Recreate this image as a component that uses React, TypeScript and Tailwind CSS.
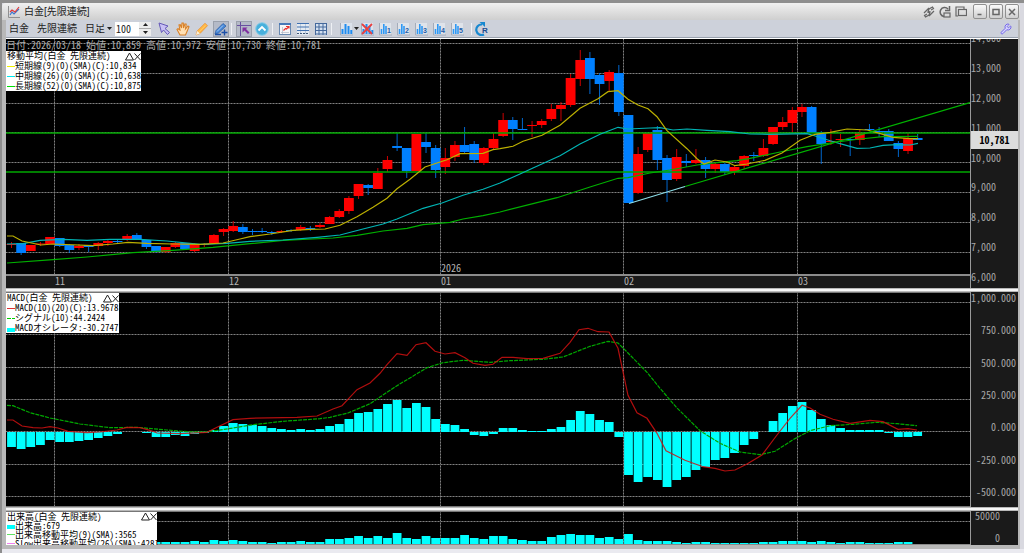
import React from 'react';
import { Wrench } from 'lucide-react';

type Candle = [high: number, top: number, bottom: number, low: number, up: 0 | 1];

const FIRST_X = 11.5;
const STEP = 9.64;
const MONTH_LINES = [54.5, 228.5, 440.5, 623.5, 797.5];
const MONTHS = [
  { label: '', span: 49 },
  { label: '11', span: 174 },
  { label: '12', span: 212 },
  { label: '01', span: 183, year: '2026' },
  { label: '02', span: 174 },
  { label: '03', span: 172 },
];

const barX = (i: number) => FIRST_X + STEP * i;

// high, body top, body bottom, low (plot units), 1 = up day
const CANDLES: Candle[] = [
  [242, 244, 245, 248, 1], [243, 243, 253, 255, 0], [245, 245, 251, 251, 1], [242, 243.5, 244.5, 246, 1],
  [237, 237, 244, 244, 1], [238, 238, 246, 247, 0], [244, 245, 250, 253, 0], [244, 246, 248, 250, 1],
  [245, 245, 247, 252, 0], [242, 243, 246, 250, 1], [240, 241, 243, 246, 1], [239, 241, 242, 243, 0],
  [234, 236, 240, 241, 1], [233, 235, 240, 240, 0], [240, 240, 247, 249, 0], [246, 246, 252, 253, 0],
  [247, 247, 252, 253, 1], [242, 243, 247, 248, 1], [243, 243, 249, 249, 0], [243, 244, 251, 252, 1],
  [243, 244, 245, 247, 1], [234, 235, 243, 243, 1], [228, 229, 232, 236, 1], [221, 226, 231, 232, 1],
  [224, 227, 232, 234, 0], [229, 231, 232, 235, 0], [228, 231, 232, 233, 0], [231, 232, 233, 235, 0],
  [230, 231, 232, 233, 1], [229, 230, 231, 232, 0], [225, 227, 230, 231, 1], [226, 228, 229, 231, 0],
  [223, 225, 227, 228, 1], [216, 217, 224, 224, 1], [209, 211, 217, 218, 1], [196, 198, 211, 214, 1],
  [184, 184, 196, 199, 1], [184, 185, 188, 195, 0], [168, 173, 189, 189, 1], [156, 160, 169, 172, 1],
  [133, 146, 148, 151, 0], [148, 148, 171, 178, 0], [134, 134, 171, 171, 1], [133, 142, 147, 153, 0],
  [145, 148, 170, 178, 0], [148, 158, 167, 174, 1], [141, 145, 157, 161, 1], [127, 145, 152, 153, 0],
  [141, 144, 160, 163, 0], [147, 148, 163, 165, 1], [133, 139, 148, 150, 1], [113, 120, 136, 137, 1],
  [117, 120, 129, 140, 0], [118, 129, 130, 130, 0], [121, 125, 126, 137, 1], [119, 121, 125, 128, 1],
  [104, 109, 119, 121, 1], [102, 105, 109, 121, 1], [74, 78, 105, 107, 1], [50, 60, 79, 86, 1],
  [52, 58, 79, 94, 0], [73, 75, 84, 105, 0], [70, 72, 81, 91, 1], [65, 73, 112, 116, 0],
  [115, 115, 203, 203, 0], [147, 154, 193, 194, 1], [133, 133, 150, 152, 1], [126, 130, 160, 170, 0],
  [155, 158, 180, 202, 0], [149, 157, 179, 181, 1], [154, 161, 163, 167, 0], [149, 160, 163, 164, 1],
  [157, 160, 169, 178, 0], [162, 164, 169, 173, 1], [163, 164, 172, 175, 0], [165, 167, 172, 175, 1],
  [155, 156, 166, 169, 1], [152, 155, 156, 161, 0], [139, 148, 156, 157, 1], [127, 127, 144, 145, 1],
  [117, 122, 127, 130, 1], [107, 110, 123, 132, 1], [104, 107, 112, 117, 1], [106, 107, 133, 133, 0],
  [131, 132, 144, 164, 0], [129, 141, 142, 145, 1], [134, 139, 140, 147, 1], [138, 139, 140, 156, 0],
  [129, 133, 140, 145, 1], [124, 129, 130, 131, 0], [127, 131, 132, 137, 0], [129, 131, 141, 141, 0],
  [141, 143, 149, 157, 0], [133, 138, 151, 154, 1], [134, 138, 140, 140, 0],
];

const SMA_SHORT =
  '7,236 13,236 22,241 41,245 53,244 93,245.7 113,244 128,242.3 147,243.3 173,244 200,244.3 223,243 240,239 250,236.7 270,234 293,230.3 310,229.3 325,229 340,225.3 357,216.7 373,207.3 387,198.3 397,188.7 410,179.3 425,167 440,162 447,159.7 460,153.7 483,153.3 493,149.7 500,148.7 513,146.3 523,141.3 542,135.3 560,125.3 580,108.3 598,98.7 608,91.7 618,90.7 628,99.3 638,105 648,108.7 657,116.7 667,130.7 687,148.7 697,158.7 704,164 715,160 727,162 735,165.7 747,164 765,160.3 782,153 800,140.3 815,134.3 830,132.3 847,129 867,130 877,132.7 893,137.3 910,138.7 918,138.7';
const SMA_MID =
  '7,244 23,243.7 40,240.3 63,239.3 87,240.3 110,239.3 140,239.3 167,241 200,244.3 227,243.3 250,241.3 283,240 317,237.3 340,235 363,229 383,224 397,219 423,208.3 442,203 463,195.3 483,189.3 500,183 520,174 533,168 560,155.7 580,144 600,134.3 618,127.3 628,129 650,128 660,127.7 673,130 687,129 707,130.3 730,131.7 750,134 770,134.3 807,133.7 813,135.3 827,139.7 840,143.7 857,148.3 870,148 883,145.3 897,144.7 910,145 918,143.3';
const SMA_LONG =
  '7,263 53,259.7 87,257 133,252.7 173,250.3 213,247.3 250,243.7 283,240.3 333,238 357,235.3 383,231 407,228.3 423,224.7 450,222.3 463,219 483,215.7 500,212 533,203.7 557,197.7 590,187 618,178.3 628,177.7 650,173 670,170 697,165 717,162.7 737,160.7 750,158.3 780,152 807,146.7 837,142 860,139 883,136.7 918,136.3';
const MACD_LINE =
  '7,420 13,420 22,426 33,427.7 42,428 50,426.7 58,428 68,431.3 87,432.7 100,432 117,430 127,427.3 140,427.7 150,430.3 157,433 180,433.7 207,432.3 217,427.3 233,419.7 250,418.3 297,417.3 317,416 333,409 342,405.7 357,389.7 370,383 380,373.3 387,364.7 397,353.7 407,355.3 416,344.7 426,342.7 435,351.3 445,354 455,352.7 465,357.7 473,363.3 485,365.3 493,364.3 502,357.3 513,357.3 527,358.7 543,358.3 560,353.3 570,342.3 579,329.7 588,328.3 598,331.7 609,332 618,348.3 628,395.3 637,412.7 647,418.3 657,433.3 666,450.7 685,460.3 703,466.7 715,468.3 725,471 735,470 747,464 762,455 777,435 790,418.3 802,405.3 810,408 820,414.3 833,419.3 850,423.3 870,420.3 883,421.7 898,429.3 908,428.7 917,430';
const SIGNAL_LINE =
  '7,405.3 13,405.7 30,412.7 50,418 80,424 110,427.7 137,427.3 167,430 187,431.7 207,432 233,428 253,424.7 283,421.3 320,418.7 330,417.3 348,413 370,403.7 397,385.7 427,367.7 443,362.7 463,360.3 490,362.3 510,360.7 543,359.3 563,357 590,346.3 608,341.3 618,343 628,353 647,372.3 660,388.3 677,408 700,430.7 720,443.3 740,452 760,454.7 775,451.3 793,439.7 810,430.7 830,425.7 853,424.3 877,422.3 897,423.7 917,425.7';

// ends of the oscillator bars, zero line is at 432
const OSCILLATOR = [
  447, 449, 447, 445, 440, 442, 442, 441, 440, 438, 436, 434, 432, 432, 433, 437, 437, 435, 436, 434, 433, 430, 426,
  423, 424, 425, 426, 428, 429, 430, 429, 430, 429, 426, 424, 419, 413, 412, 409, 404, 400, 408, 403, 407, 419, 424,
  425, 429, 435, 436, 434, 428, 428, 430, 431, 431, 429, 427, 420, 411, 414, 420, 422, 437, 475, 482, 477, 480, 487,
  480, 477, 470, 467, 460, 458, 453, 445, 439, 432, 421, 413, 406, 402, 410, 419, 425, 428, 430, 430, 430, 430, 433,
  437, 437, 436,
];

// bar heights above the volume base line
const VOLUME = [
  2, 2, 2, 3, 2, 2, 3, 2, 2, 2, 2, 2, 3, 2, 2, 2, 2, 2, 2, 3, 2, 4, 3, 4, 3, 2, 2, 1, 2, 2, 3, 2, 2, 5, 5, 6, 8, 6, 8,
  6, 11, 6, 5, 8, 6, 6, 6, 9, 6, 5, 8, 8, 5, 4, 3, 3, 7, 9, 10, 9, 9, 6, 7, 5, 10, 4, 3, 3, 3, 2, 1, 2, 2, 1, 1, 1, 1,
  1, 2, 2, 3, 3, 3, 2, 3, 2, 1, 2, 2, 1, 1, 1, 2, 2, 0,
];

const GOTHIC = 'font-["Noto_Sans_Mono_CJK_JP","Noto_Sans_CJK_JP",monospace]';

const Grid: React.FC<{ rows: number[]; top: number; bottom: number }> = ({ rows, top, bottom }) => (
  <g shapeRendering="crispEdges">
    {rows.map((y) => (
      <path key={y} d={`M6 ${y}H970`} stroke="#484848" />
    ))}
    {MONTH_LINES.map((x) => (
      <path key={x} d={`M${x} ${top}V${bottom}`} stroke="#484848" />
    ))}
    <g stroke="#808080" strokeDasharray="1 2">
      {rows.map((y) => (
        <path key={y} d={`M6 ${y}H970`} />
      ))}
      {MONTH_LINES.map((x) => (
        <path key={x} d={`M${x} ${top}V${bottom}`} />
      ))}
    </g>
  </g>
);

const PriceChart = () => (
  <svg viewBox="6 39 964 235" preserveAspectRatio="none" className="absolute inset-0 h-full w-full" role="img" aria-label="白金 先限連続">
    <Grid rows={[43.5, 73.5, 103.5, 132.5, 162.5, 192.5, 222.5, 252.5]} top={39} bottom={275} />
    {CANDLES.map(([high, top, bottom, low, up], i) => {
      const color = up ? '#ff0000' : '#0080ff';
      return (
        <g key={i} fill={color}>
          <rect x={barX(i) - 0.5} y={high} width="1" height={low - high} opacity="0.8" />
          <rect x={barX(i) - 4.9} y={top} width="9.8" height={bottom - top} />
        </g>
      );
    })}
    <g fill="none">
      <path d="M6 133H970M6 172H970" stroke="#00a800" strokeWidth="1.5" />
      <polyline points={SMA_LONG} stroke="#00b000" strokeWidth="1.2" />
      <polyline points={SMA_MID} stroke="#00b4b4" strokeWidth="1.2" />
      <polyline points={SMA_SHORT} stroke="#bcb000" strokeWidth="1.2" />
      <path d="M685 186.5L970 102.5" stroke="#00b400" strokeWidth="1.2" />
      <path d="M629 203.5L685 186.5" stroke="#8cdce6" strokeWidth="1.2" />
    </g>
  </svg>
);

const MacdChart = () => (
  <svg viewBox="6 293 964 213" preserveAspectRatio="none" className="absolute inset-0 h-full w-full" role="img" aria-label="MACD">
    <Grid rows={[302.5, 334.5, 367.5, 399.5, 431.5, 464.5, 496.5]} top={292} bottom={507} />
    <g fill="#00ffff">
      {OSCILLATOR.map((y, i) => (
        <rect key={i} x={barX(i) - 4.4} y={Math.min(y, 432)} width="8.8" height={Math.abs(y - 432)} />
      ))}
    </g>
    <g fill="none" strokeWidth="1.2">
      <polyline points={SIGNAL_LINE} stroke="#00a800" strokeDasharray="4 1" />
      <polyline points={MACD_LINE} stroke="#d01010" strokeOpacity="0.85" />
    </g>
  </svg>
);

const VolumeChart = () => (
  <svg viewBox="6 512 964 33" preserveAspectRatio="none" className="absolute inset-0 h-full w-full" role="img" aria-label="出来高">
    <Grid rows={[521.5]} top={511} bottom={545} />
    <g fill="#00ffff">
      {VOLUME.map((h, i) => (
        <rect key={i} x={barX(i) - 4.4} y={544 - h} width="8.8" height={h} />
      ))}
    </g>
    <path d="M6 544.5H970" stroke="#8a8a8a" />
  </svg>
);

interface LegendRow {
  text: string;
  color: string;
  kind?: 'line' | 'block' | 'dash';
}

const Legend: React.FC<{ title: string; rows: LegendRow[]; className: string }> = ({ title, rows, className }) => (
  <div className={`absolute left-0 bg-white pl-px text-[9px] whitespace-nowrap text-black ${className}`}>
    <div className="flex justify-between">
      <span>{title}</span>
      <span className="flex">
        <button aria-label="最小化">
          <svg width="9" height="9" viewBox="0 0 9 9" fill="none" stroke="#222">
            <path d="M4.5 1L8.5 8H.5z" />
          </svg>
        </button>
        <button aria-label="閉じる">
          <svg width="7" height="9" viewBox="0 0 7 9" fill="none" stroke="#222">
            <path d="M.5 1.5L6.5 8M6.5 1.5L.5 8" />
          </svg>
        </button>
      </span>
    </div>
    {rows.map((row) => (
      <div key={row.text} className="flex items-center font-medium">
        <svg width="8" height="9" className="shrink-0">
          {row.kind === 'block' ? (
            <rect y="4" width="8" height="4" fill={row.color} />
          ) : (
            <path d="M0 4.5H8" stroke={row.color} strokeDasharray={row.kind === 'dash' ? '4 1' : undefined} />
          )}
        </svg>
        <span>{row.text}</span>
      </div>
    ))}
  </div>
);

const Splitter = () => (
  <div className="flex h-1 shrink-0 flex-col justify-center bg-[#b8b8b8]">
    <div className="h-0.5 bg-[#f6f6f6]" />
  </div>
);

const ToolButton: React.FC<{ label: string; active?: boolean; children: React.ReactNode }> = ({ label, active, children }) => (
  <button
    aria-label={label}
    className={`flex h-4 w-4 shrink-0 items-center justify-center ${active ? 'border border-[#9aa0ac] bg-[#b4bac8]' : ''}`}
  >
    <svg width="14" height="14" viewBox="0 0 14 14" fill="none" className="shrink-0">
      {children}
    </svg>
  </button>
);

const Separator = () => <div className="mx-0.5 h-3 w-px shrink-0 bg-[#eef0f4]" />;

const Arrow: React.FC<{ className?: string }> = ({ className = '' }) => (
  <svg width="5" height="4" className={`shrink-0 ${className}`}>
    <path d="M0 0h5L2.500 3z" fill="#222" />
  </svg>
);

const MiniBars = () => (
  <>
    <rect x="1" y="1" width="12" height="12" fill="#dce2ec" />
    <path d="M1.500 1v12H14" stroke="#a4acba" />
    <path d="M3.500 12V7M6.500 12V2M9.500 12V4M12.300 12V8" stroke="#1e8cf0" strokeWidth="2" />
  </>
);

const ChartPreset: React.FC<{ n: number }> = ({ n }) => (
  <ToolButton label={`チャート設定${n}`}>
    <rect x="1" y="1" width="12" height="12" fill="#dfe3ea" />
    <path d="M1.500 1v12H14" stroke="#a4acba" />
    <path d="M3.500 12V7M5.800 12V2M8 12V4" stroke="#2e98f4" strokeWidth="1.600" />
    <text x="9" y="10.500" fontSize="7" fontWeight="700" fill="#1c5ca8" fontFamily="Liberation Sans">
      {n}
    </text>
  </ToolButton>
);

const Toolbar = () => (
  <div className="flex h-[17px] shrink-0 items-center bg-[#cdd1da] pr-1 pl-[3px] text-[10px] leading-none text-[#222]">
    <span className="w-7">白金</span>
    <span className="w-12">先限連続</span>
    <select aria-label="足種" defaultValue="day" className="w-5 appearance-none bg-transparent">
      <option value="day">日足</option>
      <option value="week">週足</option>
    </select>
    <Arrow className="mr-[3px] ml-0.5" />
    <input aria-label="表示本数" defaultValue="100" className={`h-[14px] w-6 bg-white px-px text-[10px] leading-none ${GOTHIC}`} />
    <div className="flex h-[14px] w-3 flex-col bg-[#ececec]">
      <button aria-label="増やす" className="flex flex-1 items-center justify-center">
        <svg width="5" height="3"><path d="M2.500 0L5 3H0z" fill="#222" /></svg>
      </button>
      <button aria-label="減らす" className="flex flex-1 items-center justify-center border-t border-[#aaa]">
        <svg width="5" height="3"><path d="M0 0h5L2.500 3z" fill="#222" /></svg>
      </button>
    </div>
    <div className="ml-[5px] flex gap-[3px]">
      <ToolButton label="選択">
        <path d="M2 1l2.500 9.500 2-2.500 4 4.500 2-2-4.500-4L11 4z" fill="#c8c0f4" stroke="#6458b8" />
      </ToolButton>
      <ToolButton label="手のひら">
        <path d="M4 13L1 7.500l1-.8L4 8 3 3l1.200-.3L5.500 6 6 1h1.300L7.500 6 9 1.800l1.200.3L9.500 7 12 4l1 .7-2.200 5.300-1.300 3z" fill="#ffe0b4" stroke="#d88028" strokeWidth="1.100" />
      </ToolButton>
      <ToolButton label="鉛筆">
        <path d="M1 13l1.200-4L10 1.200l2.500 2.500L5 11.500z" fill="#ffb848" stroke="#e88c30" strokeWidth=".7" />
        <path d="M1 13l1.200-4L5 11.500z" fill="#f8f0dc" />
        <path d="M4 10l6.500-6.500" stroke="#ffc860" />
      </ToolButton>
      <ToolButton label="トレンドライン" active>
        <path d="M1 12l1-3.500L9 1.500 12 4 4.500 11z" fill="#4888d8" stroke="#2458a0" strokeWidth=".7" />
        <path d="M3 9.500l6-6" stroke="#a4ccf8" />
        <path d="M1 12.500h6M7.500 10.500h6M10.500 7.500v6" stroke="#1c50a8" strokeWidth="1.400" />
      </ToolButton>
    </div>
    <Separator />
    <div className="ml-0.5 flex gap-0.5">
      <ToolButton label="クロスカーソル" active>
        <path d="M0 3.500h14M3.500 0v14" stroke="#6850a0" />
        <path d="M5.500 5.500h5l-1.500 1.500 3.500 3.500-1.500 1.500-3.500-3.500-2 2z" fill="#8030a0" />
      </ToolButton>
      <ToolButton label="上へ">
        <circle cx="7" cy="7" r="6.300" fill="#48b0dc" stroke="#88cce8" />
        <path d="M3.500 8.500L7 5l3.500 3.500" stroke="#fff" strokeWidth="1.800" />
      </ToolButton>
    </div>
    <Separator />
    <div className="ml-0.5 flex gap-0.5">
      <ToolButton label="チャートウィンドウ">
        <rect x="1.500" y="1.500" width="11" height="11" fill="#f6f6f8" stroke="#6888b0" />
        <path d="M1 2h12" stroke="#4878b8" strokeWidth="2" />
        <path d="M3 10.500h8M4.500 5v7" stroke="#b0b8c4" strokeWidth=".7" />
        <path d="M5.500 8.500l2-2 1 .5 2.500-2.500M8 4.500h3v2" stroke="#e83030" strokeWidth="1.100" />
      </ToolButton>
      <ToolButton label="横分割">
        <rect x="1" y="1" width="12" height="12" fill="#e4eaf2" />
        <path d="M4.500 2v10M9.500 2v10" stroke="#a8bcd4" strokeWidth=".7" />
        <path d="M1 1.500h12M1 5h12M1 8.500h12" stroke="#4070b0" strokeWidth="1.200" />
        <path d="M1 11.500h12" stroke="#405878" strokeDasharray="2 1" />
      </ToolButton>
      <ToolButton label="格子">
        <rect x="1" y="1" width="12" height="12" fill="#d4e0f0" />
        <path d="M1 1.500h12M1 5h12M1 8.500h12M1 12h12M1.500 1v12M5 1v12M9 1v12M12.500 1v12" stroke="#44689c" />
      </ToolButton>
    </div>
    <Separator />
    <div className="ml-1 flex items-center">
      <ToolButton label="テクニカル追加"><MiniBars /></ToolButton>
      <Arrow />
      <div className="flex gap-0.5">
        <ToolButton label="テクニカル削除">
          <MiniBars />
          <path d="M2 2l10 10M12 2L2 12" stroke="#e84040" strokeWidth="1.800" />
        </ToolButton>
        <ChartPreset n={1} />
        <ChartPreset n={2} />
        <ChartPreset n={3} />
        <ChartPreset n={4} />
        <ChartPreset n={5} />
      </div>
    </div>
    <div className="ml-1"><Separator /></div>
    <ToolButton label="リロード">
      <path d="M9 12.500A5.300 5.300 0 1 1 7 2.500" stroke="#1888d0" strokeWidth="2.200" />
      <path d="M4.500 0H10v5z" fill="#1888d0" />
      <text x="7" y="10.500" fontSize="8" fontWeight="700" fill="#1c4c90" fontFamily="Liberation Sans">R</text>
    </ToolButton>
    <button aria-label="設定" className="mr-0.5 ml-auto">
      <Wrench size={12} className="fill-[#d8d4ff] text-[#7468e8]" />
    </button>
  </div>
);

const FrameButton: React.FC<{ label: string; d: string }> = ({ label, d }) => (
  <button
    aria-label={label}
    className="flex h-[15px] w-[14px] items-center justify-center rounded-xs border border-[#909090] bg-gradient-to-b from-[#fafafa] to-[#cfcfcf]"
  >
    <svg width="8" height="8" viewBox="0 0 8 8" fill="none" stroke="#666" strokeWidth="1.500">
      <path d={d} />
    </svg>
  </button>
);

const TitleBar = () => (
  <div className="flex h-[17px] shrink-0 items-center rounded-t-sm bg-gradient-to-b from-[#f0f0f0] to-[#cfcfcf] pr-px pl-1">
    <svg width="12" height="12" viewBox="0 0 12 12" fill="none" className="ml-0.5 shrink-0">
      <path d="M.5 0v11.500H12" stroke="#909090" />
      <path d="M2 9l2-3 2 2 5-5" stroke="#3c78d0" strokeWidth="1.200" />
      <path d="M2 6l2-2 3 2 4-5" stroke="#e03838" strokeWidth="1.200" />
    </svg>
    <h1 className="ml-1 text-[10px] leading-none text-[#1c1c1c]">白金[先限連続]</h1>
    <div className="ml-auto flex items-center gap-1">
      <button aria-label="リンク">
        <svg width="12" height="12" viewBox="0 0 12 12" fill="none" stroke="#666" strokeWidth="1.200">
          <path d="M4 8L1.500 9.500l1 1.500L6 9l1-3-2 .5M8 4l2.500-1.500-1-1.500L6 3 5 6l2-.5M1 7l5-5M6 10l5-5" />
        </svg>
      </button>
      <button aria-label="更新">
        <svg width="12" height="12" viewBox="0 0 12 12" fill="none" stroke="#666" strokeWidth="1.500">
          <path d="M5 10.500A4.500 4.500 0 1 1 9 3M10.500 0v4.500H6" />
          <rect x="5" y="7" width="6" height="4" strokeWidth="1.200" />
        </svg>
      </button>
      <button aria-label="複製">
        <svg width="12" height="12" viewBox="0 0 12 12" fill="none" stroke="#666" strokeWidth="1.200">
          <path d="M3 10H1V1h8v2" />
          <rect x="3.500" y="3.500" width="8" height="6" />
        </svg>
      </button>
      <div className="ml-0.5 flex gap-0.5">
        <FrameButton label="最小化" d="M1.500 6.500h4" />
        <FrameButton label="最大化" d="M1 1.500h6v5H1z" />
        <FrameButton label="閉じる" d="M1 1l6 6M7 1L1 7" />
      </div>
    </div>
  </div>
);

const MonthRow: React.FC<{ field: 'label' | 'year'; className?: string }> = ({ field, className = '' }) => (
  <div className={`flex text-[10px] leading-[10px] text-[#b4b4b4] ${className}`}>
    {MONTHS.map((m) => (
      <span key={m.label} className="min-w-0 basis-0" style={{ flexGrow: m.span }}>
        {m[field]}
      </span>
    ))}
  </div>
);

const axisClass = 'relative w-12 shrink-0 overflow-hidden border-l border-[#9a9a9a] bg-[#1a1a1a] text-[10px] leading-[10px] text-[#a8a8a8]';

export default function App() {
  return (
    <div className="flex h-screen min-h-[400px] flex-col overflow-hidden border-t-[3px] border-l-2 border-[#8e8e8e] bg-[#d9d9e0] pr-1 font-['Liberation_Sans','Noto_Sans_CJK_JP',sans-serif]">
      <TitleBar />
      <main className="flex min-h-0 flex-1 flex-col border-r-2 border-l-4 border-[#b8b8b8]">
        <Toolbar />
        <div className="h-0.5 shrink-0 border-b border-white bg-[#98a0ac]" />

        <div className={`flex min-h-0 flex-1 flex-col ${GOTHIC}`}>
          <section className="flex min-h-0 flex-[249]">
            <div className="flex min-w-0 flex-1 flex-col">
              <div className="relative min-h-0 flex-1 border-b-2 border-[#8c8c8c] bg-black">
                <PriceChart />
                <p className="absolute top-px left-0 text-[10px] leading-[10px] whitespace-nowrap text-[#b0b0b0]">
                  日付:2026/03/18 始値:10,859 高値:10,972 安値:10,730 終値:10,781
                </p>
                <Legend
                  title="移動平均(白金 先限連続)"
                  className="top-3 w-[135px] leading-[10px]"
                  rows={[
                    { text: '短期線(9)(0)(SMA)(C):10,834', color: '#f0f000' },
                    { text: '中期線(26)(0)(SMA)(C):10,638', color: '#00e8f0' },
                    { text: '長期線(52)(0)(SMA)(C):10,875', color: '#00e000' },
                  ]}
                />
                <MonthRow field="year" className="absolute inset-x-0 bottom-px" />
              </div>
              <MonthRow field="label" className="h-3 shrink-0 bg-[#1a1a1a]" />
            </div>
            <div className={axisClass}>
              <div className="-mt-1.5 flex h-full flex-col justify-between">
                {['14,000', '13,000', '12,000', '11,000', '10,000', '9,000', '8,000', '7,000', '6,000'].map((v) => (
                  <span key={v}>{v}</span>
                ))}
              </div>
              <div className="absolute inset-x-0 top-[37%] bg-[#dcdcdc] py-1 text-center font-bold text-black">10,781</div>
            </div>
          </section>
          <Splitter />

          <section className="flex min-h-0 flex-[215]">
            <div className="relative min-w-0 flex-1 border-y border-[#777] bg-black">
              <MacdChart />
              <Legend
                title="MACD(白金 先限連続)"
                className="top-0 w-[113px] leading-[10px]"
                rows={[
                  { text: 'MACD(10)(20)(C):13.9678', color: '#e03030' },
                  { text: 'シグナル(10):44.2424', color: '#00d000', kind: 'dash' },
                  { text: 'MACDオシレータ:-30.2747', color: '#00ffff', kind: 'block' },
                ]}
              />
            </div>
            <div className={axisClass}>
              <div className="flex h-full flex-col justify-between pt-px pr-0.5 pb-2.5 text-right">
                {['1,000.000', '750.000', '500.000', '250.000', '0.000', '-250.000', '-500.000'].map((v) => (
                  <span key={v}>{v}</span>
                ))}
              </div>
            </div>
          </section>
          <Splitter />

          <section className="flex min-h-0 flex-[34]">
            <div className="relative min-w-0 flex-1 overflow-hidden border-t border-[#777] bg-black">
              <VolumeChart />
              <Legend
                title="出来高(白金 先限連続)"
                className="top-0 w-[151px] leading-[9px]"
                rows={[
                  { text: '出来高:679', color: '#00ffff', kind: 'block' },
                  { text: '出来高移動平均(9)(SMA):3565', color: '#60e060' },
                  { text: 'Slow出来高移動平均(26)(SMA):4281', color: '#f080f0' },
                ]}
              />
            </div>
            <div className={axisClass}>
              <div className="flex h-full flex-col justify-between pr-[18px] pb-0.5 text-right">
                <span>50000</span>
                <span>0</span>
              </div>
            </div>
          </section>
        </div>
        <div className="h-1 shrink-0 bg-[#b8b8b8]" />
      </main>
      <div className="-mr-1 h-1 shrink-0 bg-[#eaeaf0]" />
    </div>
  );
}
